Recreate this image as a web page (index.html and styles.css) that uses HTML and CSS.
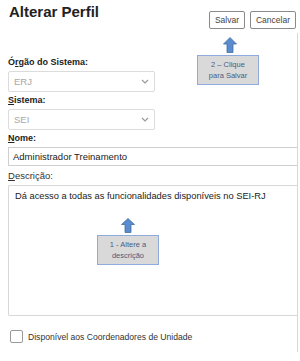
FILE: index.html
```
<!DOCTYPE html>
<html lang="pt-BR">
<head>
    <meta charset="UTF-8">
    <meta name="viewport" content="width=device-width, initial-scale=1.0">
    <title>Alterar Perfil</title>
    <link rel="stylesheet" href="styles.css">
</head>
<body>
    <div class="page">
        <div class="head">
            <h1>Alterar Perfil</h1>
            <div class="actions">
                <button class="btn">Salvar</button>
                <button class="btn">Cancelar</button>
            </div>
        </div>

        <form class="form">
            <label class="bold">Ó<u>r</u>gão do Sistema:</label>
            <div class="select">
                <span>ERJ</span>
                <svg width="8" height="5" viewBox="0 0 8 5"><path d="M1 1 L4 4 L7 1" fill="none" stroke="#999" stroke-width="1.2"/></svg>
            </div>

            <label class="bold"><u>S</u>istema:</label>
            <div class="select">
                <span>SEI</span>
                <svg width="8" height="5" viewBox="0 0 8 5"><path d="M1 1 L4 4 L7 1" fill="none" stroke="#999" stroke-width="1.2"/></svg>
            </div>

            <label class="bold"><u>N</u>ome:</label>
            <div class="input">Administrador Treinamento</div>

            <label class="desc-label"><u>D</u>escrição:</label>
            <div class="textarea">Dá acesso a todas as funcionalidades disponíveis no SEI-RJ</div>

            <div class="check-row">
                <span class="check"></span>
                <span>Disponível aos Coordenadores de Unidade</span>
            </div>
        </form>

        <!-- tutorial callouts -->
        <div class="callout callout-save">
            <svg class="arrow" width="14" height="16" viewBox="0 0 14 16"><path d="M7 0.5 L13.5 7 L10 7 L10 15.5 L4 15.5 L4 7 L0.5 7 Z" fill="#5b8bd0" stroke="#41719c" stroke-width="0.8"/></svg>
            <div class="note">2 – Clique<br>para Salvar</div>
        </div>
        <div class="callout callout-desc">
            <svg class="arrow" width="14" height="15" viewBox="0 0 14 15"><path d="M7 0.5 L13.5 6.5 L10 6.5 L10 14.5 L4 14.5 L4 6.5 L0.5 6.5 Z" fill="#5b8bd0" stroke="#41719c" stroke-width="0.8"/></svg>
            <div class="note">1 - Altere a<br>descrição</div>
        </div>
    </div>
</body>
</html>
```
FILE: styles.css
```
* {
    margin: 0;
    padding: 0;
    box-sizing: border-box;
}

body {
    font-family: "Liberation Sans", Arial, sans-serif;
    background: #fff;
    color: #222;
    width: 300px;
    height: 361px;
    overflow: hidden;
}

.page {
    position: relative;
    width: 300px;
}

.head {
    display: flex;
    justify-content: space-between;
    align-items: flex-start;
    height: 33px;
    padding: 3px 4px 0 9px;
}

h1 {
    font-size: 15px;
    font-weight: bold;
    color: #222;
    line-height: 18px;
}

.actions {
    display: flex;
    gap: 5px;
    margin-top: 8px;
}

.btn {
    font-family: inherit;
    font-size: 8.5px;
    color: #444;
    background: #fff;
    border: 1px solid #8a8a8a;
    border-radius: 2px;
    height: 18px;
    padding: 0 5px;
}

.form {
    width: 298px;
    height: 319px;
    border-right: 1px solid #d8d8d8;
    padding: 23px 0 0 8px;
    display: flex;
    flex-direction: column;
}

label {
    font-size: 9px;
    line-height: 12px;
    color: #222;
}

.bold {
    font-weight: bold;
}

.select {
    width: 147px;
    height: 21px;
    margin: 3px 0 2px;
    border: 1px solid #dcdcdc;
    border-radius: 2px;
    display: flex;
    align-items: center;
    justify-content: space-between;
    padding: 0 5px 0 5px;
    font-size: 9.5px;
    color: #a8a8a8;
}

.input {
    height: 19px;
    margin-top: 3px;
    border: 1px solid #cfcfcf;
    border-right: none;
    padding: 0 4px;
    font-size: 9.5px;
    line-height: 17px;
    color: #222;
}

.desc-label {
    margin-top: 4px;
    font-size: 9.5px;
    color: #333;
}

.textarea {
    height: 131px;
    margin-top: 3px;
    border: 1px solid #d8d8d8;
    border-right: none;
    border-radius: 2px 0 0 2px;
    padding: 5px 6px;
    font-size: 9.3px;
    color: #222;
}

.check-row {
    display: flex;
    align-items: center;
    gap: 5px;
    margin-top: 14px;
    padding-left: 2px;
    font-size: 8.6px;
    color: #333;
}

.check {
    width: 13px;
    height: 13px;
    border: 1px solid #999;
    border-radius: 2px;
    background: #fff;
}

.callout {
    position: absolute;
    display: flex;
    flex-direction: column;
    align-items: center;
}

.callout-save {
    left: 197px;
    top: 37px;
    width: 62px;
}

.callout-desc {
    left: 97px;
    top: 218px;
    width: 62px;
}

.callout-save .arrow {
    margin-left: 4px;
}

.note {
    width: 62px;
    background: #d9d9d9;
    border: 1px solid #8faadc;
    font-size: 7.5px;
    line-height: 11px;
    color: #4a5d80;
    text-align: center;
    padding: 3px 0;
    margin-top: 2px;
}
```
